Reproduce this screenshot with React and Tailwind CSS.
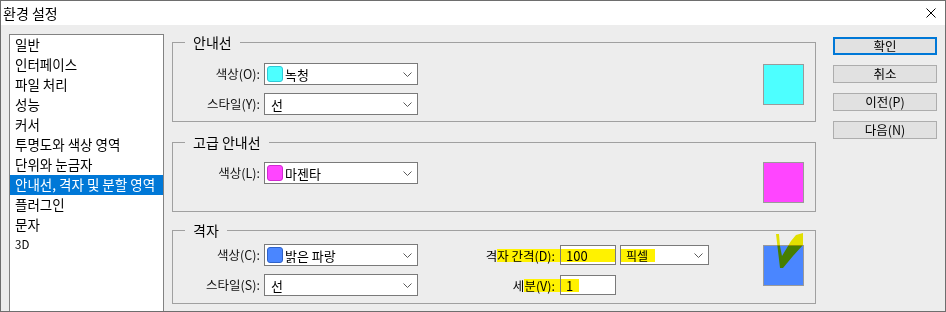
const items = [
  "일반",
  "인터페이스",
  "파일 처리",
  "성능",
  "커서",
  "투명도와 색상 영역",
  "단위와 눈금자",
  "안내선, 격자 및 분할 영역",
  "플러그인",
  "문자",
  "3D",
];

function Chevron() {
  return (
    <svg width="9" height="5" viewBox="0 0 9 5" className="ml-auto mr-[5px] shrink-0">
      <polyline points="0.5,0.5 4.5,4.5 8.5,0.5" fill="none" stroke="#5a5a5a" strokeWidth="1" />
    </svg>
  );
}

function Select({ swatch, swatchBorder, text, h = "h-[22px]" }) {
  return (
    <div className={`${h} w-[154px] border border-[#7a7a7a] bg-white flex items-center`}>
      {swatch ? (
        <>
          <span
            className="ml-[2px] w-[16px] h-[16px] rounded-[3px] border shrink-0"
            style={{ background: swatch, borderColor: swatchBorder }}
          />
          <span className="ml-[2px] text-[13px] leading-none">{text}</span>
        </>
      ) : (
        <span className="pl-[6px] text-[13px] leading-none">{text}</span>
      )}
      <Chevron />
    </div>
  );
}

function Label({ children }) {
  return <div className="w-[87px] text-right text-[12.5px] leading-none text-[#111]">{children}</div>;
}

function Group({ title, className, children }) {
  return (
    <fieldset className={`border border-[#a0a0a0] ${className}`}>
      <legend className="ml-[12px] px-[8px] text-[14px] leading-[18px]">{title}</legend>
      {children}
    </fieldset>
  );
}

export default function App() {
  return (
    <div className="w-[946px] h-[312px] border border-[#6e6e6e] bg-[#ededed] flex flex-col font-['Noto_Sans_CJK_KR','Noto_Sans',sans-serif] text-black overflow-hidden">
      {/* title bar */}
      <div className="h-[24px] bg-white flex items-center pl-[2px] shrink-0">
        <span className="text-[14px] leading-none">환경 설정</span>
        <svg width="10" height="10" viewBox="0 0 10 10" className="ml-auto mr-[9px]">
          <path d="M0.5 0.5 L9.5 9.5 M9.5 0.5 L0.5 9.5" stroke="#000" strokeWidth="1" />
        </svg>
      </div>

      <div className="flex flex-1 min-h-0">
        {/* category list */}
        <div className="ml-[8px] mt-[9px] w-[155px] border-x border-t border-[#828282] bg-white">
          {items.map((it, i) => (
            <div
              key={it}
              className={`h-[20px] flex items-center pl-[5px] leading-none ${
                it === "3D" ? "text-[11.5px]" : "text-[13.5px]"
              } ${i === 7 ? "bg-[#0078d7] text-white" : ""}`}
            >
              {it}
            </div>
          ))}
        </div>

        {/* groups */}
        <div className="ml-[8px] w-[644px] flex flex-col">
          <Group title="안내선" className="mt-[8px] h-[89px]">
            <div className="flex w-full">
              <div className="flex flex-col gap-[8px] mt-[12px]">
                <div className="flex items-center">
                  <Label>색상(O):</Label>
                  <div className="ml-[4px]">
                    <Select swatch="#4dffff" swatchBorder="#2fc9d6" text="녹청" />
                  </div>
                </div>
                <div className="flex items-center">
                  <Label>스타일(Y):</Label>
                  <div className="ml-[4px]">
                    <Select text="선" />
                  </div>
                </div>
              </div>
              <div className="ml-auto mr-[11px] mt-[13px] w-[41px] h-[41px] border border-[#9a9a9a] bg-[#4dffff]" />
            </div>
          </Group>

          <Group title="고급 안내선" className="mt-[11px] h-[79px]">
            <div className="flex w-full">
              <div className="flex items-center mt-[11px] self-start">
                <Label>색상(L):</Label>
                <div className="ml-[4px]">
                  <Select swatch="#ff45ff" swatchBorder="#d02ad0" text="마젠타" />
                </div>
              </div>
              <div className="ml-auto mr-[11px] mt-[11px] w-[41px] h-[41px] border border-[#9a9a9a] bg-[#ff45ff]" />
            </div>
          </Group>

          <Group title="격자" className="mt-[9px] h-[83px]">
            <div className="flex w-full">
              <div className="flex flex-col gap-[8px] mt-[5px]">
                <div className="flex items-center">
                  <Label>색상(C):</Label>
                  <div className="ml-[4px]">
                    <Select swatch="#4a86ff" swatchBorder="#2f62c8" text="밝은 파랑" />
                  </div>
                  <div className="w-[142px] flex justify-end text-[12.5px] leading-[13px]">
                    <span>격</span>
                    <span className="bg-[#fff200] pr-[5px]">자 간격(D):</span>
                  </div>
                  <div className="w-[56px] h-[20px] border border-[#7a7a7a] bg-white flex items-center">
                    <div className="w-full h-[13px] bg-[#fff200] pl-[5px] text-[13px] leading-[13px]">100</div>
                  </div>
                  <div className="ml-[4px] w-[89px] h-[20px] border border-[#7a7a7a] bg-white flex items-center">
                    <span className="bg-[#fff200] w-[34px] h-[13px] pl-[5px] text-[12px] leading-[13px]">픽셀</span>
                    <Chevron />
                  </div>
                </div>
                <div className="flex items-center">
                  <Label>스타일(S):</Label>
                  <div className="ml-[4px]">
                    <Select text="선" />
                  </div>
                  <div className="w-[142px] flex justify-end text-[12.5px] leading-[13px]">
                    <span>세</span>
                    <span className="bg-[#fff200] pr-[5px]">분(V):</span>
                  </div>
                  <div className="w-[56px] h-[20px] border border-[#7a7a7a] bg-white flex items-center">
                    <span className="w-[18px] h-[13px] bg-[#fff200] pl-[5px] text-[13px] leading-[13px]">1</span>
                  </div>
                </div>
              </div>
              <div className="ml-auto mr-[11px] mt-[6px] relative w-[41px] h-[41px] border border-[#9a9a9a] bg-[#4a86ff]">
                <svg
                  width="41"
                  height="40"
                  viewBox="0 0 41 40"
                  className="absolute left-[-1px] top-[-14px] mix-blend-multiply"
                >
                  <polygon points="13,2 16,2 17,14 19,24 28,9 33,3 40,1 40,13 30,24 20,36 17,36" fill="#f2f000" />
                </svg>
              </div>
            </div>
          </Group>
        </div>

        {/* buttons */}
        <div className="ml-[17px] mt-[12px] w-[104px] flex flex-col gap-[10px]">
          <button className="h-[18px] border-2 border-[#0078d7] bg-[#e1e1e1] text-[12.5px] leading-none">확인</button>
          <button className="h-[18px] border border-[#adadad] bg-[#e1e1e1] text-[12.5px] leading-none">취소</button>
          <button className="h-[18px] border border-[#adadad] bg-[#e1e1e1] text-[12.5px] leading-none">이전(P)</button>
          <button className="h-[18px] border border-[#adadad] bg-[#e1e1e1] text-[12.5px] leading-none">다음(N)</button>
        </div>
      </div>
    </div>
  );
}
